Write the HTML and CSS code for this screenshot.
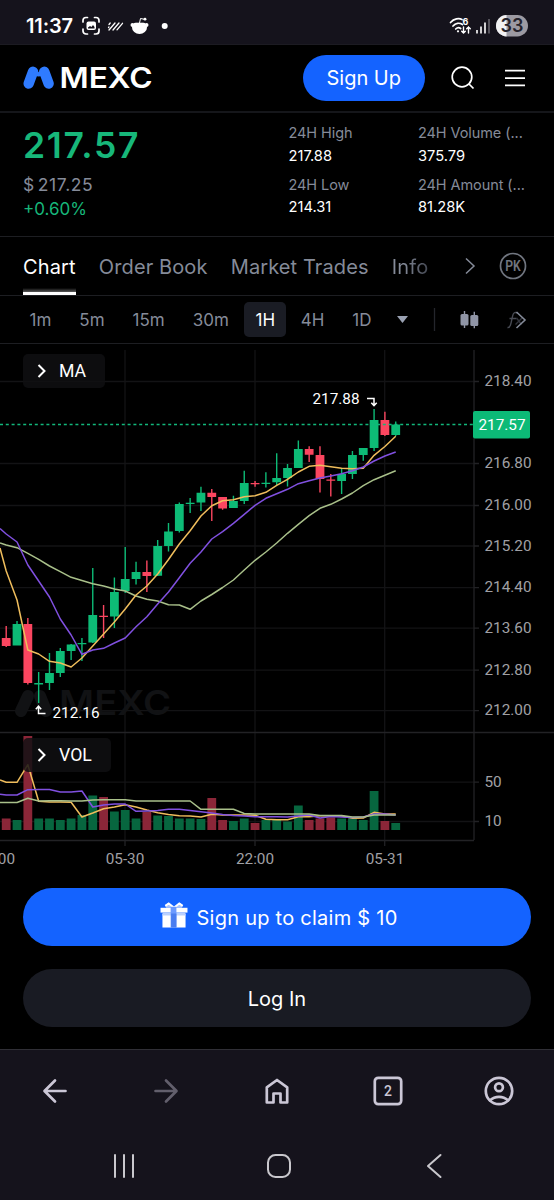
FILE: index.html
```html
<!DOCTYPE html>
<html lang="en">
<head>
<meta charset="utf-8">
<title>MEXC</title>
<link rel="stylesheet" href="styles.css">
</head>
<body>
<div class="phone">
  <div class="status">
    <span class="clock">11:37</span>
    <svg class="status-left" width="90" height="24" viewBox="0 0 90 24">
      <g fill="none" stroke="#fff" stroke-width="1.700" stroke-linecap="round">
        <path d="M2 8V6.500a3 3 0 0 1 3-3h1.500M13.500 3.500H15a3 3 0 0 1 3 3V8M18 15v2a3 3 0 0 1-3 3h-1.500M6.500 20H5a3 3 0 0 1-3-3v-2"/>
      </g>
      <rect x="5.500" y="7.500" width="9.500" height="8.500" rx="2" fill="#fff"/>
      <path d="M7 14.500v-1l2-1.500 1.500 1 1.500-2 1.500 2v1.500z" fill="#15131c"/>
      <g stroke="#fff" stroke-width="1.300" stroke-linecap="round">
        <path d="M28 10.500l1.200-1.500M28 16l6-7M32 16l6-7M36 15.800l5.500-6.500M27.500 13.500l.5-.6"/>
      </g>
      <ellipse cx="58.500" cy="13.500" rx="7.500" ry="6.500" fill="#fff"/>
      <path d="M53 5h11v3.700H53z" fill="#15131c"/>
      <circle cx="51.500" cy="11" r="2" fill="#fff"/><circle cx="65.500" cy="11" r="2" fill="#fff"/>
      <path d="M58.500 9l1-4.500 4 .8" fill="none" stroke="#fff" stroke-width="1"/><circle cx="64" cy="5.200" r="1.400" fill="#fff"/>
      <circle cx="83.700" cy="12" r="3" fill="#fff"/>
    </svg>
    <svg class="status-right" width="80" height="24" viewBox="0 0 80 24">
      <g fill="none" stroke="#fff" stroke-width="1.700" stroke-linecap="round">
        <path d="M1.500 8.500C5 4.500 10 4 13 5.500M4 12c2.500-3 6.500-3.500 9.500-1.500M6.700 15c1.500-1.500 3.500-1.600 5-.5"/>
        <path d="M14.500 13v6M12.700 17.300l1.800 1.800 1.800-1.800M19.500 19v-6M17.700 14.800l1.800-1.800 1.800 1.800" stroke-width="1.400"/>
      </g>
      <circle cx="9" cy="17.300" r="1.100" fill="#fff"/>
      <text x="13.500" y="11" class="wifi-gen">6</text>
      <path d="M28 16v3.500M32 12.500v7" stroke="#fff" stroke-width="1.600"/><path d="M36 8.500v11" stroke="#fff" stroke-width="1.600"/><path d="M40 5v14.500" stroke="#66646c" stroke-width="1.600"/>
      <clipPath id="pill"><rect x="47" y="1" width="32" height="21.500" rx="10.700"/></clipPath>
      <g clip-path="url(#pill)"><path d="M47 0h32v24H47z" fill="#9c9aa2"/><path d="M47 0h10.500v24H47z" fill="#f2f2f4"/></g>
      <text x="63" y="18" class="battery">33</text>
    </svg>
  </div>

  <header class="header">
    <svg class="logo" width="136" height="36" viewBox="0 -5 136 36" role="img" aria-label="MEXC">
      <path d="M5.700 18.500L10 6.800M21.300 6.800L25.600 18.500" stroke="#2f7bff" stroke-width="10.400" stroke-linecap="round"/>
      <path d="M12 2.500l3.600 4.700L19.300 2.500l3 8-6.700 1-6.700-1z" fill="#2f7bff"/>
      <text x="36.500" y="22.700" textLength="93" lengthAdjust="spacingAndGlyphs" class="wordmark">MEXC</text>
    </svg>
    <a class="signup">Sign Up</a>
    <svg class="search" width="26" height="26" viewBox="0 0 26 26" fill="none" stroke="#fff" stroke-width="1.700"><circle cx="12" cy="12" r="9.800"/><path d="M19 19l4.500 4.500"/></svg>
    <svg class="menu" width="22" height="20" viewBox="0 0 22 20" stroke="#fff" stroke-width="1.800"><path d="M1 2.600h20M1 10.100h20M1 17.400h20"/></svg>
  </header>

  <section class="summary">
    <div class="quote">
      <div class="last">217.57</div>
      <div class="fiat">$ 217.25</div>
      <div class="change">+0.60%</div>
    </div>
    <dl class="stats">
      <div><dt>24H High</dt><dd>217.88</dd></div>
      <div><dt>24H Volume (...</dt><dd>375.79</dd></div>
      <div><dt>24H Low</dt><dd>214.31</dd></div>
      <div><dt>24H Amount (...</dt><dd>81.28K</dd></div>
    </dl>
  </section>

  <nav class="tabs">
    <a class="tab active">Chart</a><a class="tab">Order Book</a><a class="tab">Market Trades</a><a class="tab fade">Info</a>
    <svg class="more" width="12" height="18" viewBox="0 0 12 18" fill="none" stroke="#858b99" stroke-width="1.500"><path d="M2 1.500l8 7.500-8 7.500"/></svg>
    <svg class="pk" width="28" height="28" viewBox="0 0 28 28"><circle cx="14" cy="14" r="12.500" fill="none" stroke="#70757f" stroke-width="1.700"/><text x="14" y="18.700" textLength="15.500" lengthAdjust="spacingAndGlyphs" class="pk-text">PK</text></svg>
  </nav>

  <nav class="frames">
    <a>1m</a><a>5m</a><a>15m</a><a>30m</a><a class="selected">1H</a><a>4H</a><a>1D</a>
    <svg class="tools" width="140" height="28" viewBox="0 0 140 28">
      <path d="M6 10h11l-5.500 7z" fill="#9aa1b2"/>
      <path d="M43.500 2v23" stroke="#24262c" stroke-width="1.300"/>
      <g fill="#9095a6"><rect x="69.500" y="8" width="8" height="11.500" rx="1.500"/><rect x="79.300" y="9" width="8" height="11" rx="1.500"/><path d="M72.800 5h1.400v17h-1.400zM82.600 5.800h1.400v16.400h-1.400z"/></g>
      <path d="M116.500 21.500c4.500 1 4-13 6.500-14.500 1.500-1 3-.5 3.500.5M118.500 12.500h7" stroke="#484b54" stroke-width="1.400" fill="none"/>
      <path d="M124.500 18.500l6.500-6.500M125.500 12l5 6.500" stroke="#30323a" stroke-width="1.400" fill="none"/>
      <path d="M125.500 6l8.500 8-8.500 8" stroke="#858b99" stroke-width="1.600" fill="none"/>
    </svg>
  </nav>

  <main class="chart">
    <svg id="plot" width="554" height="526" viewBox="0 344 554 526">
      <g class="grid">
        <path d="M125 350V840M255 350V840M384.700 350V840M0 381.500H474M0 463.500H474M0 505.500H474M0 546H474M0 587.700H474M0 628.200H474M0 670.200H474M0 710.700H474M0 782.200H474M0 821.500H474"/>
      </g>
      <g class="axis">
        <path d="M0 732.500H554M0 840.500H474M474 350V840M474 381.500h5M474 463.500h5M474 505.500h5M474 546h5M474 587.700h5M474 628.200h5M474 670.200h5M474 710.700h5M474 782.200h5M474 821.500h5M125 840v6M255 840v6M384.700 840v6"/>
      </g>
      <g class="watermark">
        <path d="M21 711L28 696M40 696L46 711" stroke="#111214" stroke-width="12" stroke-linecap="round"/>
        <text x="59" y="715" textLength="112" lengthAdjust="spacingAndGlyphs">MEXC</text>
      </g>
      <g id="volume"></g>
      <g id="candles"></g>
      <g id="lines"></g>
      <path class="price-line" d="M0 424.500H474"/>
      <g class="axis-text">
        <text x="484.500" y="386">218.40</text><text x="484.500" y="468">216.80</text><text x="484.500" y="510">216.00</text><text x="484.500" y="550.500">215.20</text><text x="484.500" y="592.200">214.40</text><text x="484.500" y="632.700">213.60</text><text x="484.500" y="674.700">212.80</text><text x="484.500" y="715.200">212.00</text>
        <text x="484.500" y="787">50</text><text x="484.500" y="826">10</text>
        <text x="15" y="864.300" text-anchor="end">22:00</text><text x="125" y="864.300" text-anchor="middle">05-30</text><text x="255" y="864.300" text-anchor="middle">22:00</text><text x="385" y="864.300" text-anchor="middle">05-31</text>
      </g>
      <rect x="473" y="411" width="57" height="27.500" rx="2" fill="#0cba77"/>
      <text class="tag" x="478.500" y="429.500">217.57</text>
      <g class="marks">
        <text x="312.500" y="403.500">217.88</text><text x="52.500" y="718">212.16</text>
        <path d="M367 398.500h7v6.500M371.300 402.700l2.700 3 2.700-3M45.500 713.500h-7v-7M35.800 709.200l2.700-3 2.700 3"/>
      </g>
    </svg>
    <div class="badge ma"><svg width="10" height="14" viewBox="0 0 10 14"><path d="M1.500 1l6 6-6 6"/></svg>MA</div>
    <div class="badge vol"><svg width="10" height="14" viewBox="0 0 10 14"><path d="M1.500 1l6 6-6 6"/></svg>VOL</div>
  </main>

  <section class="actions">
    <a class="btn primary">
      <svg width="28" height="26" viewBox="0 0 28 27">
        <path d="M14 6L8 1 4.500 3.500 6 6M14 6l6-5 3.500 2.500L22 6" fill="#a8c5ff"/>
        <path d="M13.500 5.500L8.500 1.500 5 4M14.500 5.500l5-4L23 4" fill="none" stroke="#fff" stroke-width="2"/>
        <path d="M0 6h28v5H0z" fill="#fff"/><path d="M2 12.500h24V26.500H2z" fill="#fff"/><path d="M2 11h24v3H2z" fill="#b9d0ff"/>
        <path d="M10.500 5h6v21.500h-6z" fill="#6c9aff"/><path d="M11 12h5.500v14.500H11z" fill="#4a7df0"/>
      </svg>
      <span>Sign up to claim $ 10</span>
    </a>
    <a class="btn secondary"><span>Log In</span></a>
  </section>

  <footer class="bottom">
    <div class="browser-bar">
      <svg width="30" height="30" viewBox="0 0 30 30"><path d="M25.500 15H5M15 4.500L4.500 15 15 25.500"/></svg>
      <svg class="dim" width="30" height="30" viewBox="0 0 30 30"><path d="M4.500 15H25M15 4.500L25.500 15 15 25.500"/></svg>
      <svg width="30" height="30" viewBox="0 0 30 30"><path d="M4.800 11.300L15 4l10.200 7.300V26.500h-6.700v-9h-7v9H4.800z"/></svg>
      <svg width="30" height="30" viewBox="0 0 30 30"><rect x="1.800" y="1.800" width="26.400" height="26.400" rx="3.500"/><text x="15" y="20" class="tab-count">2</text></svg>
      <svg width="30" height="30" viewBox="0 0 30 30"><circle cx="15" cy="15" r="13.200"/><circle cx="15" cy="11.300" r="3.900"/><path d="M6 24.300c5-4.600 13-4.600 18 0"/></svg>
    </div>
    <div class="system-bar">
      <svg width="24" height="26" viewBox="0 0 24 26"><path d="M3 2v22M12 2v22M21 2v22"/></svg>
      <svg width="26" height="26" viewBox="0 0 26 26"><rect x="2" y="2" width="22" height="22" rx="7.500"/></svg>
      <svg width="18" height="26" viewBox="0 0 18 26"><path d="M15.500 2L3 13l12.500 11"/></svg>
    </div>
  </footer>
</div>
<script src="chart.js"></script>
</body>
</html>
```
FILE: styles.css
```css
* { box-sizing: border-box; }
body { margin: 0; background: #000; color: #fff; font-family: Inter, "Liberation Sans", sans-serif; }
.phone { width: 554px; height: 1200px; display: flex; flex-direction: column; overflow: hidden; }
svg { display: block; flex: none; }

.status { height: 45px; flex: none; background: #15131c; border-bottom: 1px solid #1c1b22; display: flex; align-items: center; padding: 8px 25px 0 26px; }
.clock { font-size: 20px; font-weight: 600; letter-spacing: -.1px; width: 55px; line-height: 24px; white-space: nowrap; }
.status-right { margin-left: auto; }
.wifi-gen { font: 700 9px Inter, sans-serif; fill: #fff; }
.battery { font: 600 18px Inter, sans-serif; fill: #24222b; text-anchor: middle; }

.header { height: 68px; flex: none; display: flex; align-items: center; padding: 0 28px 0 23px; border-bottom: 2px solid #15161a; }
.wordmark { font: 600 28px Inter, sans-serif; fill: #fff; }
.signup { margin-left: auto; width: 121.500px; height: 46px; border-radius: 23px; background: #1463ff; font-size: 20px; display: flex; align-items: center; justify-content: center; }
.search { margin-left: 25px; }
.menu { margin-left: 28.500px; }

.summary { height: 124px; flex: none; display: flex; border-bottom: 1px solid #1d1e22; padding: 9px 20px 0 23px; }
.quote { width: 265.500px; color: #858b99; }
.last { font-size: 35.500px; line-height: 46px; margin-top: 1px; font-weight: 600; color: #17b77a; letter-spacing: 1.700px; }
.fiat { font-size: 17.500px; line-height: 24px; margin-top: 4px; letter-spacing: .6px; word-spacing: -2.500px; }
.change { font-size: 17px; line-height: 24px; color: #17b77a; }
.stats { flex: 1; margin: 0; display: grid; grid-template-columns: 129.500px 1fr; grid-auto-rows: 51.500px; white-space: nowrap; }
dt { font-size: 14.500px; letter-spacing: -.08px; line-height: 21px; color: #858b99; }
dd { margin: 1.500px 0 0; font-size: 14.700px; line-height: 22px; }

.tabs { height: 59px; flex: none; display: flex; align-items: stretch; gap: 23.300px; border-bottom: 1px solid #1d1e22; padding: 0 27px 0 23px; font-size: 20px; letter-spacing: .1px; line-height: 60px; color: #858b99; white-space: nowrap; }
.tab.active { color: #fff; background: linear-gradient(to top, #fff 3px, rgba(255, 255, 255, .35) 3px, transparent 7px); }
.tab.fade { background: linear-gradient(90deg, #858b99 30%, #454954); background-clip: text; -webkit-background-clip: text; color: transparent; }
.more { align-self: center; margin-left: auto; }
.pk { align-self: center; }
.pk-text { font: 600 14px Roboto, sans-serif; letter-spacing: 0; fill: #70757f; text-anchor: middle; }

.frames { height: 48px; flex: none; display: flex; align-items: center; border-bottom: 1px solid #1d1e22; padding: 0 20px 0 20.500px; font-size: 17px; color: #858b99; white-space: nowrap; }
.frames a { padding: 0 9px; margin-right: 10px; line-height: 36px; height: 35px; }
.frames .selected { background: #1a1c24; color: #fff; border-radius: 5px; padding: 0; width: 46px; text-align: center; margin-left: -3.500px; margin-right: 5.500px; }
.tools { margin-left: auto; margin-right: 3.500px; }

.chart { position: relative; height: 526px; flex: none; font-family: Roboto, sans-serif; }
.grid path { stroke: #131315; stroke-width: 1.300; fill: none; }
.axis path { stroke: #222225; stroke-width: 1.300; fill: none; }
.watermark text { font: 600 34px Inter, sans-serif; fill: #111214; }
.axis-text text { font-size: 15.300px; fill: #a0a0a5; }
.tag, .marks text { font-size: 15.300px; fill: #fff; }
.marks path { stroke: #fff; stroke-width: 1.500; fill: none; }
.price-line { stroke: #12b77b; stroke-width: 1.400; stroke-dasharray: 3 2.800; }
.badge { position: absolute; left: 23px; height: 34px; border-radius: 5px; background: rgba(15, 16, 18, .84); font-size: 17.700px; display: flex; align-items: center; gap: 12px; padding-left: 14px; }
.badge path { stroke: #fff; stroke-width: 2; fill: none; }
.ma { top: 10px; width: 82px; }
.vol { top: 394px; width: 88px; }

.actions { flex: none; padding: 18px 23px 0; display: flex; flex-direction: column; gap: 23px; height: 179px; }
.btn { height: 58px; flex: none; border-radius: 29px; display: flex; align-items: center; justify-content: center; gap: 9px; font-size: 20px; padding-top: 1px; }
.btn.primary { padding-left: 3px; }
.btn.primary span { letter-spacing: .25px; }
.btn.primary svg { margin-top: -6px; }
.primary { background: #1463ff; }
.secondary { background: #191b23; }

.bottom { flex: 1; background: #15131c; border-top: 1px solid #302f36; }
.bottom svg { fill: none; stroke: #cbc7d6; stroke-width: 2.700; stroke-linejoin: round; stroke-linecap: round; }
.browser-bar { height: 81px; display: flex; align-items: center; justify-content: space-between; padding: 0 40px; }
.browser-bar .dim { stroke: #625f6c; }
.bottom .tab-count { font: 500 14px Roboto, sans-serif; fill: #cbc7d6; stroke: none; text-anchor: middle; }
.system-bar { display: flex; gap: 130px; padding: 21.500px 0 0 112px; }
.bottom .system-bar svg { stroke: #c9c8cd; stroke-width: 2; }
.system-bar svg:last-child { margin-left: 3px; }
```
FILE: chart.js
```js
const x = i => 6.2 + 10.82 * i;

// Each bar: direction, high, body top, body bottom, low, volume top
const bars = [
  ['r',626,638,646,647,818.5],['g',621,624,645.5,645.5,820],['r',618,624,683,684.5,736],['g',672,683,684.5,703,818.5],
  ['g',653,673,683,690,818.5],['g',648,651,673,677,820],['g',644,644.5,651,660,818.5],['g',638,643,644.3,661,815],
  ['g',568,615,642.5,643,795.5],['r',605,615.7,617,638,797],['g',577.5,592,616.5,628,811.5],['g',547,579,591,593,810],
  ['g',561.7,572,579,584.5,818.5],['r',560.5,572,576,592,812],['g',540,546,575.8,576,815.5],['g',523,531.5,546,551.5,816],
  ['g',502.5,504,531,532.5,818.5],['g',498,502.8,504,513,818.5],['g',486.7,492.7,502.5,511,819],['r',489,492.7,497,521,798],
  ['r',497,497,508.5,509.7,820],['g',495.7,501,508,508,821],['g',470.7,483,501,504,818.5],['r',481,483,484.3,486.7,823],
  ['g',472.3,482.7,484,487.5,820],['g',453.3,478,482.3,485,819],['g',464,468,478,486.5,821.5],['g',440.5,449,468,468,805.5],
  ['r',446.3,449,454.7,462,820],['r',446.3,455,479,492.5,818.5],['r',474,479.5,480.8,496.5,817.5],['g',468,474,481,494,818.5],
  ['g',451,455,474,479,818.5],['g',448,448,455,460.7,820],['g',409,420,448,451,791],['r',411.7,420,435,436,821],
  ['g',421.5,424.5,435,436,823]
];

// Moving averages: the first value lies on the left edge of the plot
const series = [
  ['#a9c08a', [543,545,547.7,553.3,559.3,566,571.7,577.3,580.5,583.7,586,589,591,596,599.3,601,604.7,605,609.3,601,594.5,587.5,580,570,560.3,552,543,533.3,524.3,515.7,508.3,504.3,499,493,485.7,479.7,475.3,470.7]],
  ['#efbd5c', [548,571,600,650,654,661.3,663,667,658,646,634,622,609,595,586,574,559.5,544,530.7,516,505.7,500.7,499.7,496.7,495.7,492.3,485.3,479.3,472,466.3,465.3,466.7,468.3,468.7,468.3,455.3,446.5,436.3]],
  ['#8050e0', [528.5,534,542,565,581,597,619,635,654.3,650,648.3,643,638,626.7,616.7,604,592,577.7,563.3,552,539,531.7,523.3,514.3,505.3,498.3,493.7,489.3,483.7,480.7,478,476,473.7,470.7,467,461,456,452]],
  ['#efbd5c', [780,782.3,782.3,764.7,801.3,802,802,802.3,817,813,808.7,807,804.7,807,810,812.7,814.5,815.7,816,817,814.3,815,815,815,815.3,819.3,819.7,819.7,816.7,816.7,815.7,815.7,816,818.3,818,812.3,814,814]],
  ['#8050e0', [794.3,795,795,789.7,789.5,789.5,792,792,791,807,805,804,804,811.3,811,810.5,809.3,809.3,810.5,811.7,813,814.5,815.5,816,816.7,816.7,816.7,817,816,815,818,816.5,817,817.5,817,814,814,815]],
  ['#a9c08a', [802.5,802.5,802.5,798.3,801,800.7,800.7,801,801,800,799.7,799.7,799.7,801,801,801,801,801,801,809.3,809.3,809.3,809.3,813.5,814,814,814,814,814,814,815.5,815.5,815.5,817,817,815,815,815]]
];

const fill = { r: '#fb4660', g: '#0dbb76' };
const dark = { r: '#8b2638', g: '#07663f' };
let candles = '', volume = '';
bars.forEach(([d, hi, top, bottom, lo, v], i) => {
  candles += `<path d="M${x(i) - 0.7} ${hi}h1.4V${lo}h-1.4zM${x(i) - 4.4} ${top}h8.8V${bottom}h-8.8z" fill="${fill[d]}"/>`;
  volume += `<path d="M${x(i) - 4.4} ${v}h8.8V830h-8.8z" fill="${dark[d]}"/>`;
});
document.getElementById('candles').innerHTML = candles;
document.getElementById('volume').innerHTML = volume;
document.getElementById('lines').innerHTML = series.map(([c, ys]) =>
  `<polyline fill="none" stroke="${c}" stroke-width="1.5" stroke-linejoin="round" points="${ys.map((y, i) => (i ? x(i - 1) : 0) + ',' + y).join(' ')}"/>`
).join('');
```
